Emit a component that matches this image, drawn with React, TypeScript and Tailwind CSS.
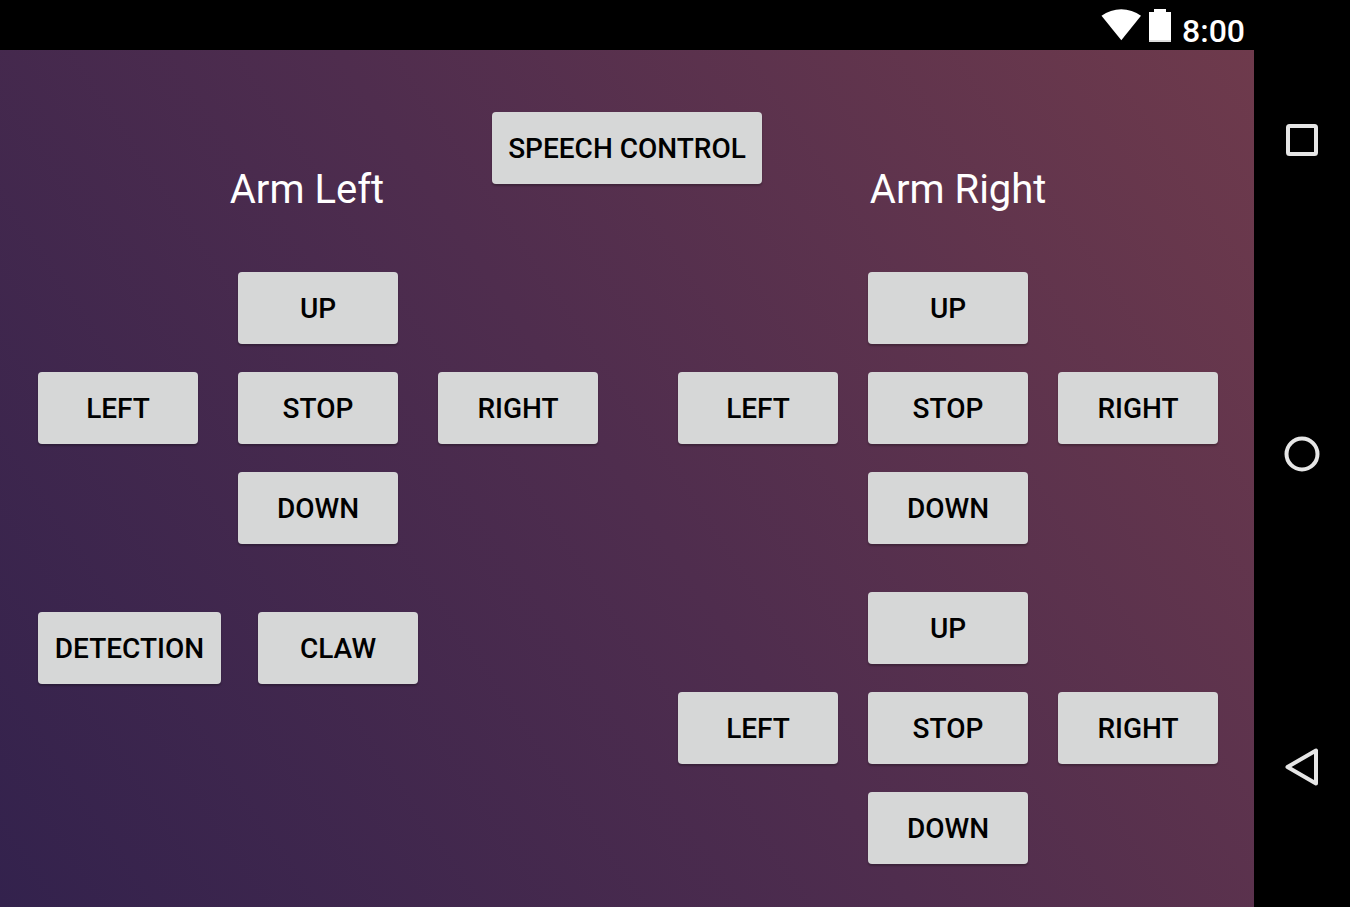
import type { ReactNode } from 'react';

function PadButton({ children, className = '' }: { children: ReactNode; className?: string }) {
  return (
    <button
      type="button"
      className={`h-[72px] min-w-40 rounded-[4px] bg-[#d6d7d7] px-4 pt-0.5 text-[28px] font-medium whitespace-nowrap text-black uppercase shadow-[0_2px_2px_rgba(0,0,0,0.25)] active:bg-[#bfc0c0] ${className}`}
    >
      {children}
    </button>
  );
}

function DirectionPad({ label, className }: { label: string; className: string }) {
  return (
    <div role="group" aria-label={label} className={`grid grid-cols-[repeat(3,160px)] gap-y-7 ${className}`}>
      <PadButton className="col-start-2">Up</PadButton>
      <PadButton className="col-start-1">Left</PadButton>
      <PadButton>Stop</PadButton>
      <PadButton>Right</PadButton>
      <PadButton className="col-start-2">Down</PadButton>
    </div>
  );
}

function StatusBar() {
  return (
    <div className="flex h-[50px] items-start justify-end bg-black pr-[9px] text-white">
      <svg className="mt-2 h-[34px] w-[42px]" viewBox="0 0 42 34" fill="currentColor" aria-hidden="true">
        <path d="M1.5 7.8C13 -1 29.500 -1 41 7.800L21.300 32.300Z" />
      </svg>
      <svg className="mt-2 ml-[7px] h-[34px] w-[22px]" viewBox="0 0 22 34" fill="currentColor" aria-hidden="true">
        <path d="M5 1h12v3h5v30H0V4h5Z" />
        <path d="M0 32h22v2H0Z" fill="#dcdcdc" />
      </svg>
      <time className="mt-[11px] ml-[11px] text-[32px] leading-10 font-medium">8:00</time>
    </div>
  );
}

function NavigationBar() {
  return (
    <nav className="flex w-24 shrink-0 flex-col items-center justify-between bg-black py-[120px] text-[#e6e6e6]">
      <button type="button" aria-label="Recent apps">
        <svg className="size-10" viewBox="0 0 40 40" fill="none" stroke="currentColor" strokeWidth="4">
          <rect x="6" y="6" width="28" height="28" rx="1.500" />
        </svg>
      </button>
      <button type="button" aria-label="Home">
        <svg className="size-10" viewBox="0 0 40 40" fill="none" stroke="currentColor" strokeWidth="4">
          <circle cx="20" cy="20" r="15.500" />
        </svg>
      </button>
      <button type="button" aria-label="Back">
        <svg className="size-10" viewBox="0 0 40 40" fill="none" stroke="currentColor" strokeWidth="4" strokeLinejoin="round">
          <path d="M34 3.500V36.500L5.500 20Z" />
        </svg>
      </button>
    </nav>
  );
}

export default function App() {
  return (
    <div className="flex min-h-screen bg-black font-['Roboto',sans-serif]">
      <div className="flex min-w-0 flex-1 flex-col">
        <StatusBar />
        <main className="flex-1 bg-[linear-gradient(56deg,#33224d,#4f2d4e_50%,#6e3a4c)] pt-[62px] pb-[43px]">
          <header className="grid grid-cols-[1fr_auto_1fr] gap-x-27">
            <h2 className="pt-[54px] text-right text-[40px] leading-12 text-white">Arm Left</h2>
            <div>
              <PadButton>Speech Control</PadButton>
            </div>
            <h2 className="pt-[54px] text-[40px] leading-12 text-white">Arm Right</h2>
          </header>
          <div className="flex justify-between pt-[58px] pr-9 pl-[38px]">
            <section className="flex flex-col gap-17">
              <DirectionPad label="Left arm" className="gap-x-10" />
              <div className="flex gap-[37px]">
                <PadButton className="w-[183px]">Detection</PadButton>
                <PadButton>Claw</PadButton>
              </div>
            </section>
            <section className="flex flex-col gap-12">
              <DirectionPad label="Right arm, upper joint" className="gap-x-[30px]" />
              <DirectionPad label="Right arm, lower joint" className="gap-x-[30px]" />
            </section>
          </div>
        </main>
      </div>
      <NavigationBar />
    </div>
  );
}
